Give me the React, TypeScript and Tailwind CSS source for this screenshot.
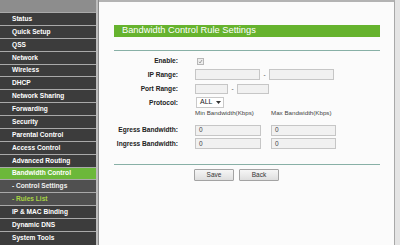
const MENU: { label: string; kind?: 'active' | 'sub' | 'subActive' }[] = [
  { label: 'Status' },
  { label: 'Quick Setup' },
  { label: 'QSS' },
  { label: 'Network' },
  { label: 'Wireless' },
  { label: 'DHCP' },
  { label: 'Network Sharing' },
  { label: 'Forwarding' },
  { label: 'Security' },
  { label: 'Parental Control' },
  { label: 'Access Control' },
  { label: 'Advanced Routing' },
  { label: 'Bandwidth Control', kind: 'active' },
  { label: '- Control Settings', kind: 'sub' },
  { label: '- Rules List', kind: 'subActive' },
  { label: 'IP & MAC Binding' },
  { label: 'Dynamic DNS' },
  { label: 'System Tools' },
];

function MenuItem({ label, kind }: { label: string; kind?: 'active' | 'sub' | 'subActive' }) {
  let cls = 'bg-[#3c3c3c] text-white';
  if (kind === 'active') cls = 'bg-[#6cb83a] text-white';
  if (kind === 'sub') cls = 'bg-[#505050] text-[#f0f0f0]';
  if (kind === 'subActive') cls = 'bg-[#505050] text-[#a8d443]';
  return (
    <div
      className={`h-[12.88px] shrink-0 border-t border-[#a9a9a9] flex items-center pl-[12px] text-[6.6px] font-bold whitespace-nowrap ${cls}`}
    >
      {label}
    </div>
  );
}

function Field({ w, value }: { w: string; value?: string }) {
  return (
    <div
      className={`${w} h-full bg-[#f1f1f1] border border-[#c6c6c6] flex items-center pl-[3px] text-[6.5px] text-[#444]`}
    >
      {value}
    </div>
  );
}

function Row({ label, h, children }: { label?: string; h: string; children: React.ReactNode }) {
  return (
    <div className={`flex items-center ${h}`}>
      <div className="w-[79px] shrink-0 text-right text-[6.6px] font-bold text-[#222] whitespace-nowrap">
        {label}
      </div>
      <div className="ml-[17px] flex items-center h-full">{children}</div>
    </div>
  );
}

function Btn({ label }: { label: string }) {
  return (
    <div className="w-[40px] h-[12px] border border-[#a3a3a3] rounded-[1px] bg-gradient-to-b from-[#f6f6f6] to-[#dedede] flex items-center justify-center text-[6.5px] text-[#333]">
      {label}
    </div>
  );
}

export default function App() {
  return (
    <div className="w-[400px] h-[245px] overflow-hidden flex bg-[#e6e6e6] font-['Liberation_Sans',Arial,sans-serif]">
      {/* Sidebar */}
      <div className="w-[96px] shrink-0 flex flex-col bg-[#3c3c3c]">
        <div className="h-[12px] shrink-0 bg-[#8d8d8d]" />
        {MENU.map((m) => (
          <MenuItem key={m.label} label={m.label} kind={m.kind} />
        ))}
      </div>
      <div className="w-[3px] shrink-0 bg-[#bdbdbd] border-r border-[#8a8a8a]" />

      {/* Content */}
      <div className="w-[296px] shrink-0 bg-[#fbfbfb] border-t-2 border-[#b3b3b3] border-r border-r-[#a8a8a8] flex flex-col">
        <div className="mt-[23px] mx-[15px] mr-[14px] h-[12px] bg-[#66b32e] flex items-center pl-[8px] text-[9.3px] text-white whitespace-nowrap">
          Bandwidth Control Rule Settings
        </div>
        <div className="mt-[13px] mx-[15px] mr-[14px] h-px bg-[#88b0a6]" />

        <div className="mt-[4px] flex flex-col">
          <Row label="Enable:" h="h-[12px]">
            <div className="ml-[2px] w-[7px] h-[7px] border border-[#b8b8b8] bg-[#eeeeee] flex items-center justify-center">
              <svg width="5" height="5" viewBox="0 0 10 10">
                <path d="M2 5.5 L4 8 L8 2" fill="none" stroke="#8a8a8a" strokeWidth="1.6" />
              </svg>
            </div>
          </Row>
          <Row label="IP Range:" h="h-[15px]">
            <div className="h-[11px] flex items-center">
              <Field w="w-[65px]" />
              <span className="w-[9px] text-center text-[6.5px] text-[#555]">-</span>
              <Field w="w-[65px]" />
            </div>
          </Row>
          <Row label="Port Range:" h="h-[14px]">
            <div className="h-[10px] flex items-center">
              <Field w="w-[33px]" />
              <span className="w-[9px] text-center text-[6.5px] text-[#555]">-</span>
              <Field w="w-[32px]" />
            </div>
          </Row>
          <Row label="Protocol:" h="h-[13px]">
            <div className="ml-[1px] w-[28px] h-[11px] bg-white border border-[#c9c9c9] flex items-center pl-[3px] gap-[4px] text-[7px] text-[#222]">
              <span>ALL</span>
              <svg width="5" height="3" viewBox="0 0 5 3">
                <path d="M0 0 L5 0 L2.5 3 Z" fill="#333" />
              </svg>
            </div>
          </Row>
          <Row h="h-[8px]">
            <div className="flex text-[6.2px] text-[#444] whitespace-nowrap">
              <span className="w-[76px]">Min Bandwidth(Kbps)</span>
              <span>Max Bandwidth(Kbps)</span>
            </div>
          </Row>
          <div className="mt-[6px]">
            <Row label="Egress Bandwidth:" h="h-[14px]">
              <div className="h-[11px] flex items-center gap-[10px]">
                <Field w="w-[66px]" value="0" />
                <Field w="w-[65px]" value="0" />
              </div>
            </Row>
            <Row label="Ingress Bandwidth:" h="h-[13px]">
              <div className="h-[11px] flex items-center gap-[10px]">
                <Field w="w-[66px]" value="0" />
                <Field w="w-[65px]" value="0" />
              </div>
            </Row>
          </div>
        </div>

        <div className="mt-[14px] mx-[15px] mr-[14px] h-px bg-[#88b0a6]" />
        <div className="mt-[4px] pl-[95px] flex gap-[5px]">
          <Btn label="Save" />
          <Btn label="Back" />
        </div>
      </div>
      <div className="flex-1 bg-[#e4e4e4]" />
    </div>
  );
}
